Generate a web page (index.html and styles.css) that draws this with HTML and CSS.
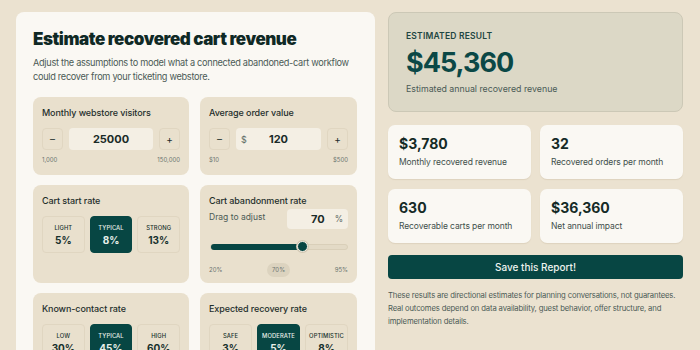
FILE: index.html
```html
<!DOCTYPE html>
<html>
<head>
<meta charset="utf-8">
<link rel="stylesheet" href="styles.css">
</head>
<body>
<div class="page">
  <section class="calc">
    <h1 class="title">Estimate recovered cart revenue</h1>
    <p class="intro">Adjust the assumptions to model what a connected abandoned-cart workflow could recover from your ticketing webstore.</p>
    <div class="grid">
      <div class="field">
        <div class="label">Monthly webstore visitors</div>
        <div class="stepper">
          <button class="step">–</button>
          <div class="num">25000</div>
          <button class="step">+</button>
        </div>
        <div class="range"><span>1,000</span><span>150,000</span></div>
      </div>
      <div class="field">
        <div class="label">Average order value</div>
        <div class="stepper">
          <button class="step">–</button>
          <div class="num prefixed"><span class="pre">$</span>120</div>
          <button class="step">+</button>
        </div>
        <div class="range"><span>$10</span><span>$500</span></div>
      </div>
      <div class="field">
        <div class="label">Cart start rate</div>
        <div class="opts">
          <div class="opt"><span class="ol">LIGHT</span><span class="ov">5%</span></div>
          <div class="opt on"><span class="ol">TYPICAL</span><span class="ov">8%</span></div>
          <div class="opt"><span class="ol">STRONG</span><span class="ov">13%</span></div>
        </div>
      </div>
      <div class="field">
        <div class="label">Cart abandonment rate</div>
        <div class="dragrow">
          <span class="hint">Drag to adjust</span>
          <div class="pct"><span>70</span><span class="unit">%</span></div>
        </div>
        <div class="slider">
          <div class="fill" style="width:67%"></div>
          <div class="thumb" style="left:67%"></div>
        </div>
        <div class="range slr"><span>20%</span><span class="cur">70%</span><span>95%</span></div>
      </div>
      <div class="field">
        <div class="label">Known-contact rate</div>
        <div class="opts">
          <div class="opt"><span class="ol">LOW</span><span class="ov">30%</span></div>
          <div class="opt on"><span class="ol">TYPICAL</span><span class="ov">45%</span></div>
          <div class="opt"><span class="ol">HIGH</span><span class="ov">60%</span></div>
        </div>
      </div>
      <div class="field">
        <div class="label">Expected recovery rate</div>
        <div class="opts">
          <div class="opt"><span class="ol">SAFE</span><span class="ov">3%</span></div>
          <div class="opt on"><span class="ol">MODERATE</span><span class="ov">5%</span></div>
          <div class="opt"><span class="ol">OPTIMISTIC</span><span class="ov">8%</span></div>
        </div>
      </div>
    </div>
  </section>
  <aside class="results">
    <div class="hero">
      <div class="eyebrow">ESTIMATED RESULT</div>
      <div class="big">$45,360</div>
      <div class="sub">Estimated annual recovered revenue</div>
    </div>
    <div class="stats">
      <div class="stat"><div class="sv">$3,780</div><div class="sl">Monthly recovered revenue</div></div>
      <div class="stat"><div class="sv">32</div><div class="sl">Recovered orders per month</div></div>
      <div class="stat"><div class="sv">630</div><div class="sl">Recoverable carts per month</div></div>
      <div class="stat"><div class="sv">$36,360</div><div class="sl">Net annual impact</div></div>
    </div>
    <button class="save">Save this Report!</button>
    <p class="note">These results are directional estimates for planning conversations, not guarantees. Real outcomes depend on data availability, guest behavior, offer structure, and implementation details.</p>
  </aside>
</div>
</body>
</html>
```

FILE: styles.css
```css
* { box-sizing: border-box; }
html, body { margin: 0; padding: 0; }
body {
  background: #ebe2d0;
  font-family: "Inter", "DejaVu Sans", sans-serif;
  color: #17302c;
  width: 700px;
  height: 350px;
  overflow: hidden;
}
.page {
  display: flex;
  gap: 13px;
  padding: 12px 17px 0 16px;
  align-items: flex-start;
}
.calc {
  width: 359px;
  background: #faf8f3;
  border-radius: 8px;
  padding: 17px 12px 20px 17px;
  height: 400px;
}
.title {
  margin: 0;
  font-family: "Inter", sans-serif;
  font-weight: 900;
  font-size: 17px;
  letter-spacing: -0.45px;
  color: #0f2925;
  line-height: 21px;
}
.intro {
  margin: 6px 0 0 0;
  max-width: 320px;
  font-size: 9.2px;
  letter-spacing: -0.3px;
  line-height: 14px;
  color: #4b5b56;
}
.grid {
  margin-top: 13px;
  display: grid;
  grid-template-columns: 156px 157px;
  column-gap: 11px;
  row-gap: 10px;
}
.field {
  background: #e9e0cd;
  border-radius: 8px;
  padding: 10px 9px 10px 9px;
  min-height: 78px;
}
.field:nth-child(3), .field:nth-child(4) { height: 98px; }
.label {
  font-size: 9px;
  font-weight: 500;
  letter-spacing: -0.1px;
  color: #1f2f2c;
  line-height: 12px;
}
.stepper {
  display: flex;
  gap: 6px;
  margin-top: 9px;
  height: 22px;
}
.step {
  width: 21px;
  height: 22px;
  border: 1px solid #e0d6c1;
  background: #e9e0cd;
  border-radius: 4px;
  font-family: inherit;
  font-size: 10px;
  color: #1f2f2c;
  padding: 0;
}
.num {
  flex: 1;
  background: #f4efe4;
  border-radius: 4px;
  display: flex;
  align-items: center;
  justify-content: center;
  font-weight: 700;
  font-size: 11px;
  color: #1a2b28;
  position: relative;
}
.num .pre {
  position: absolute;
  left: 5px;
  font-weight: 400;
  font-size: 9px;
  color: #5b6a65;
}
.range {
  display: flex;
  justify-content: space-between;
  margin-top: 6px;
  font-size: 6px;
  color: #6b7570;
  line-height: 8px;
}
.opts {
  display: flex;
  gap: 5px;
  margin-top: 9px;
}
.opt {
  flex: 1;
  height: 37px;
  border: 1px solid #e0d6c1;
  border-radius: 4px;
  display: flex;
  flex-direction: column;
  align-items: center;
  justify-content: center;
  gap: 3px;
}
.opt.on {
  background: #074643;
  border-color: #074643;
  color: #e8efe9;
}
.ol {
  font-size: 5.8px;
  font-weight: 500;
  line-height: 7px;
  letter-spacing: 0.1px;
}
.ov {
  font-size: 10px;
  font-weight: 700;
  line-height: 12px;
}
.dragrow {
  display: flex;
  justify-content: space-between;
  align-items: flex-start;
  margin-top: 2px;
}
.hint {
  font-size: 8.5px;
  line-height: 10px;
  color: #4b5b56;
  margin-top: 3px;
}
.pct {
  width: 61px;
  height: 20px;
  background: #f4efe4;
  border-radius: 4px;
  display: flex;
  align-items: center;
  justify-content: flex-end;
  gap: 10px;
  padding-right: 5px;
  font-weight: 700;
  font-size: 11px;
  color: #1a2b28;
}
.pct .unit { font-size: 8.5px; font-weight: 400; color: #5b6a65; }
.slider {
  position: relative;
  margin: 15px 0 0 1px;
  height: 6px;
  border-radius: 3px;
  background: #e3dac6;
  border: 1px solid #d9cfb9;
}
.fill {
  position: absolute;
  left: 0; top: -1px;
  height: 6px;
  border-radius: 3px;
  background: #074643;
}
.thumb {
  position: absolute;
  top: -4px;
  width: 11px;
  height: 11px;
  margin-left: -5px;
  border-radius: 50%;
  background: #074643;
  border: 1.5px solid #f4efe4;
  box-shadow: 0 0 0 1px #d0c6b1;
}
.slr { margin-top: 13px; align-items: center; }
.cur {
  background: #dcd3bf;
  border-radius: 7px;
  padding: 3px 5px;
}
.results {
  width: 295px;
  display: flex;
  flex-direction: column;
}
.hero {
  height: 100px;
  background: #dcd8c6;
  border: 1px solid #ccc8b6;
  border-radius: 8px;
  padding: 18px 17px;
}
.eyebrow {
  font-size: 8.5px;
  font-weight: 600;
  color: #1e4642;
  letter-spacing: 0.2px;
  line-height: 10px;
}
.big {
  font-size: 27px;
  font-weight: 700;
  color: #0b4846;
  line-height: 32px;
  margin-top: 6px;
  letter-spacing: -1px;
}
.sub {
  font-size: 8.8px;
  color: #4b5b56;
  margin-top: 4px;
  line-height: 11px;
}
.stats {
  margin-top: 13px;
  display: grid;
  grid-template-columns: 143px 143px;
  gap: 10px 9px;
}
.stat {
  height: 54px;
  background: #faf8f3;
  border-radius: 7px;
  padding: 10px 11px;
  box-shadow: 0 1px 1px rgba(120,100,60,0.12);
}
.sv {
  font-size: 14px;
  font-weight: 700;
  color: #142a26;
  line-height: 17px;
}
.sl {
  font-size: 8.5px;
  letter-spacing: -0.1px;
  color: #3f4f4b;
  margin-top: 5px;
  line-height: 11px;
}
.save {
  margin-top: 12px;
  height: 24px;
  background: #074643;
  color: #eef3ef;
  border: none;
  border-radius: 4px;
  font-family: inherit;
  font-size: 10px;
  font-weight: 500;
}
.note {
  margin: 10px 0 0 0;
  max-width: 292px;
  font-size: 7.7px;
  letter-spacing: -0.15px;
  line-height: 13px;
  color: #4b5b56;
}
```
